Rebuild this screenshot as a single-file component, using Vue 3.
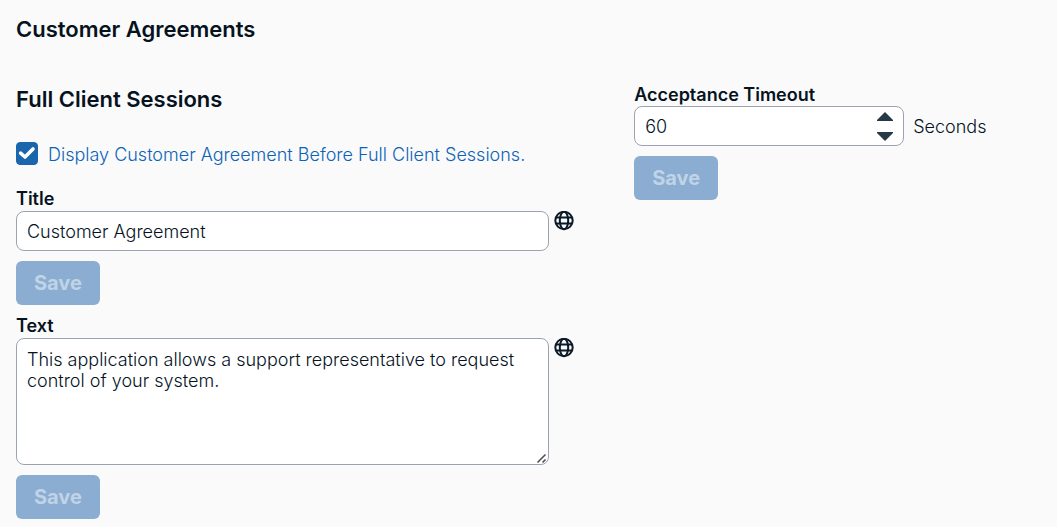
<script setup>
import { ref } from 'vue'

const displayAgreement = ref(true)
const title = ref('Customer Agreement')
const text = ref('This application allows a support representative to request control of your system.')
const timeout = ref(60)
</script>

<template>
  <main class="page">
    <h1 class="heading">Customer Agreements</h1>
    <div class="columns">
      <section class="column sessions">
        <h2 class="heading">Full Client Sessions</h2>
        <div class="check">
          <span class="check-box">
            <input id="display" v-model="displayAgreement" type="checkbox" />
            <svg v-if="displayAgreement" class="tick" viewBox="0 0 22 22" aria-hidden="true">
              <path d="M4.6 11.2 9 15 17 7" />
            </svg>
          </span>
          <label for="display">Display Customer Agreement Before Full Client Sessions.</label>
        </div>

        <form class="field" @submit.prevent>
          <label for="title">Title</label>
          <div class="row">
            <input id="title" v-model="title" class="control" type="text" />
            <button class="globe" type="button" aria-label="Translate title">
              <svg viewBox="0 0 20 20">
                <circle cx="10" cy="9.5" r="8.7" />
                <ellipse cx="10" cy="9.5" rx="4.2" ry="8.7" />
                <path d="M2 6.5h16M2 12.5h16" />
              </svg>
            </button>
          </div>
          <button class="save" type="submit" disabled>Save</button>
        </form>

        <form class="field" @submit.prevent>
          <label for="text">Text</label>
          <div class="row">
            <textarea id="text" v-model="text" class="control" rows="5" spellcheck="false"></textarea>
            <button class="globe" type="button" aria-label="Translate text">
              <svg viewBox="0 0 20 20">
                <circle cx="10" cy="9.5" r="8.7" />
                <ellipse cx="10" cy="9.5" rx="4.2" ry="8.7" />
                <path d="M2 6.5h16M2 12.5h16" />
              </svg>
            </button>
          </div>
          <button class="save" type="submit" disabled>Save</button>
        </form>
      </section>

      <section class="column">
        <form class="field timeout" @submit.prevent>
          <label for="timeout">Acceptance Timeout</label>
          <div class="row unit-row">
            <div class="spinner">
              <input id="timeout" v-model.number="timeout" class="control" type="number" min="0" />
              <div class="steps">
                <button type="button" aria-label="Increase" @click="timeout++">
                  <svg viewBox="0 0 18 10"><path d="M9 0 17 8V9H1V8Z" /></svg>
                </button>
                <button type="button" aria-label="Decrease" @click="timeout--">
                  <svg viewBox="0 0 18 10"><path d="M9 10 17 2V1H1V2Z" /></svg>
                </button>
              </div>
            </div>
            <span>Seconds</span>
          </div>
          <button class="save" type="submit" disabled>Save</button>
        </form>
      </section>
    </div>
  </main>
</template>

<style>
body {
  background: #fafafa;
}
</style>

<style scoped>
.page {
  padding: 16px 16px 8px;
  box-sizing: border-box;
  font: 300 18px/21px Inter, sans-serif;
  color: #06131f;
}

.heading {
  margin: 0;
  font-size: 22px;
  line-height: 26px;
  font-weight: 600;
}

.columns {
  display: grid;
  grid-template-columns: 3fr 2fr;
  column-gap: 8px;
  margin-top: 44px;
}

.sessions {
  padding-right: 52px;
}

.check {
  display: flex;
  align-items: center;
  gap: 10px;
  margin-top: 30px;
  color: #0c63b8;
}

.check label {
  padding-top: 2px;
}

.check-box {
  display: grid;
  width: 22px;
  height: 23px;
}

.check-box > * {
  grid-area: 1 / 1;
}

.check-box input {
  appearance: none;
  width: 100%;
  height: 100%;
  margin: 0;
  border: 1px solid #1b65ac;
  border-radius: 4px;
  background: #fff;
}

.check-box input:checked {
  background: #1b65ac;
}

.tick {
  width: 22px;
  height: 22px;
  fill: none;
  stroke: #fff;
  stroke-width: 3.6;
  stroke-linecap: round;
  stroke-linejoin: round;
  pointer-events: none;
}

.field {
  display: flex;
  flex-direction: column;
  align-items: flex-start;
  margin-top: 10px;
}

.check + .field {
  margin-top: 23px;
}

.field > label {
  padding-bottom: 2px;
  font-weight: 600;
}

.row {
  display: flex;
  align-items: flex-start;
  gap: 5px;
  width: 100%;
}

.control {
  display: block;
  flex: 1;
  min-width: 0;
  box-sizing: border-box;
  height: 40px;
  margin: 0;
  padding: 0 10px;
  border: 1px solid #9ca3b0;
  border-radius: 8px;
  background: #fff;
  color: #06131f;
  font: inherit;
}

textarea.control {
  height: 127px;
  padding: 10px;
}

textarea.control::-webkit-resizer {
  background: url("data:image/svg+xml,%3Csvg xmlns='http://www.w3.org/2000/svg' viewBox='0 0 15 15'%3E%3Cpath d='M4.5 13.5 12.5 5.5M9.5 13.5 12.5 10.5' stroke='%23505050' stroke-width='1.6'/%3E%3C/svg%3E") no-repeat right bottom / 15px 15px;
}

.globe {
  width: 20px;
  height: 20px;
  padding: 0;
  border: 0;
  background: none;
}

.globe svg {
  display: block;
  fill: none;
  stroke: #0b1a28;
  stroke-width: 2;
}

.save {
  height: 44px;
  margin-top: 10px;
  padding: 0 18px;
  border: 0;
  border-radius: 6px;
  background: #8badd1;
  color: #c0d3e7;
  font: 700 20px/24px Inter, sans-serif;
}

.field.timeout {
  margin-top: -2px;
}

.timeout > label {
  padding-bottom: 1px;
}

.unit-row {
  align-items: center;
  gap: 9px;
}

.spinner {
  position: relative;
  width: 270px;
}

.spinner .control {
  width: 100%;
  appearance: textfield;
}

.spinner .control::-webkit-inner-spin-button {
  appearance: none;
}

.steps {
  position: absolute;
  top: 6px;
  right: 10px;
  display: grid;
  gap: 9px;
}

.steps button {
  width: 18px;
  height: 10px;
  padding: 0;
  border: 0;
  background: none;
}

.steps svg {
  display: block;
  fill: #263947;
}
</style>
